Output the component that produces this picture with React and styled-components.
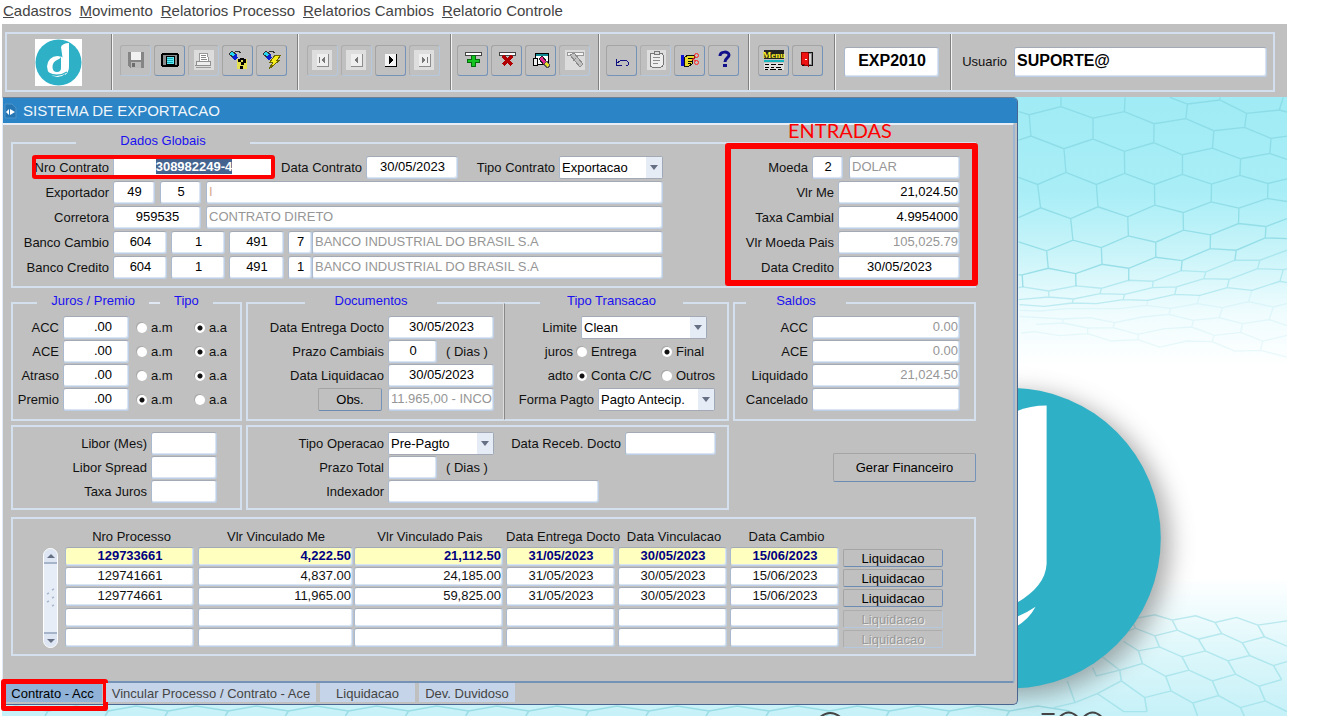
import React, { useEffect, useRef } from 'react'
import styled, { createGlobalStyle } from 'styled-components'

const GlobalStyle = createGlobalStyle`
  * {
    box-sizing: border-box;
  }
  body {
    margin: 0;
    background: #fff;
    color: #111;
    font: 13px/16px "Liberation Sans", Arial, sans-serif;
  }
  input, select, button {
    font: inherit;
    color: inherit;
    margin: 0;
  }
`

const Page = styled.div`
  margin: 0 42px 0 2px;
  min-width: 1240px;
`

const MenuBar = styled.nav`
  display: flex;
  gap: 8px;
  height: 24px;
  padding-left: 1px;
  font-size: 15px;
  line-height: 22px;
`

const MenuLink = styled.a`
  color: #444;
  text-decoration: none;
  white-space: nowrap;
`

/* ---------- toolbar ---------- */

const Toolbar = styled.header`
  background: #c0c0c0;
  padding: 8px 12px 5px 3px;
`

const ToolbarFrame = styled.div`
  display: flex;
  height: 60px;
  border: 2px solid #d3dfee;
`

const Section = styled.div`
  display: flex;
  align-items: center;
  justify-content: center;
  gap: 3px;
  flex: ${(p) => (p.$grow ? '1 1 ' : '0 0 ')}${(p) => p.$width}px;
  padding: ${(p) => (p.$grow ? '0 6px 0 8px' : '0 2px 4px 0')};
  border-right: ${(p) => (p.$grow ? 'none' : '1px solid #808080')};
  box-shadow: ${(p) => (p.$grow ? 'none' : '1px 0 0 #f4f4f4')};
`

const FieldSection = styled(Section)`
  padding-bottom: 0;
`

const ToolButton = styled.button`
  display: flex;
  align-items: center;
  justify-content: center;
  width: 31px;
  height: 31px;
  padding: 0;
  background: #c0c0c0;
  border: 1px solid;
  border-color: ${(p) =>
    p.disabled ? '#adadad #b6c8de #b6c8de #adadad' : '#a4a4a4 #7593b8 #7593b8 #a4a4a4'};
  border-radius: 3px;
`

const Logo = styled.svg`
  width: 47px;
  height: 47px;
`

/* ---------- shared controls ---------- */

const Field = styled.input`
  width: ${(p) => p.$width}px;
  height: ${(p) => p.$height || 23}px;
  flex: none;
  padding: 0 ${(p) => p.$padRight || 1}px 2px 2px;
  text-align: ${(p) => p.$align || 'left'};
  font-weight: ${(p) => (p.$bold ? 700 : 400)};
  font-size: ${(p) => p.$size || 13}px;
  color: ${(p) => p.$color || '#000'};
  background: ${(p) => p.$bg || '#fff'};
  border: 1px solid;
  border-color: #a3a9b5 #bccfe6 #bccfe6 #a9b9cf;
  border-radius: 3px;
  box-shadow: inset -1px -1px 0 #dbe5f1;
  outline: none;

  &::selection {
    background: #44648f;
    color: #fff;
  }
`

const GrowField = styled(Field)`
  flex: 1;
  width: 0;
`

const PushButton = styled.button`
  width: ${(p) => p.$width}px;
  height: ${(p) => p.$height}px;
  padding: 0;
  background: #c0c0c0;
  border: 1px solid;
  border-color: #a4a4a4 #7593b8 #6d8bb0 #a4a4a4;
  border-radius: 2px;
  color: #000;
`

const RowButton = styled(PushButton)`
  display: block;
  margin-top: 2px;
  padding-top: 1px;
  line-height: 15px;

  &:disabled {
    color: #999;
    text-shadow: 1px 1px 0 #ececec;
    border-color: #adadad #b6c8de #b6c8de #adadad;
  }
`

const Drop = styled.span`
  display: inline-grid;
  grid-template-columns: 1fr 16px;
  flex: none;
  width: ${(p) => p.$width}px;
  height: 23px;
  background: #fff;
  border: 1px solid;
  border-color: #a3a9b5 #9fa9b8 #a3a9b5 #a9b9cf;
  border-radius: 2px;

  select {
    grid-area: 1 / 1 / 2 / 3;
    appearance: none;
    padding: 0 0 0 2px;
    border: none;
    background: none;
    outline: none;
    color: #000;
  }
`

const Arrow = styled.span`
  grid-area: 1 / 2;
  display: flex;
  align-items: center;
  justify-content: center;
  background: #e6ecf5;
  pointer-events: none;

  &::after {
    content: "";
    border: 4px solid transparent;
    border-top: 5px solid #667085;
    border-bottom: none;
  }
`

const Label = styled.label`
  flex: none;
  width: ${(p) => p.$width}px;
  padding-right: 4px;
  text-align: right;
  white-space: nowrap;
`

const Unit = styled.span`
  margin-left: 9px;
`

const RadioLabel = styled.label`
  display: flex;
  align-items: center;
  gap: 4px;
  width: ${(p) => p.$width}px;
  white-space: nowrap;
`

const Radio = styled.input`
  appearance: none;
  width: 10px;
  height: 10px;
  border-radius: 50%;
  background: #fff;
  box-shadow: -1px -1px 0 #a9a9a9;

  &:checked {
    background: radial-gradient(circle, #111 0 2px, #fff 3px);
  }
`

/* ---------- window ---------- */

const Desktop = styled.main`
  position: relative;
  padding-bottom: 11px;
  background: linear-gradient(
    #a0ebf5, #a9eef7 95px, #c8f4f9 155px, #effcfe 215px, #fff 270px,
    #fff 480px, #d9f6fa 565px, #c6f1f8
  );
`

const Backdrop = styled.svg`
  position: absolute;
  inset: 0;
  width: 100%;
  height: 100%;
`

const Window = styled.section`
  position: relative;
  width: 79%;
  min-width: 1016px;
  background: #c0c0c0;
  border: 1px solid;
  border-color: #6d7f95 #4a6690 #4a6690 #e2eaf5;
  border-radius: 0 5px 5px 0;
`

const TitleBar = styled.h1`
  display: flex;
  align-items: center;
  gap: 6px;
  height: 25px;
  margin: 0;
  padding-left: 1px;
  background: #2b84c5;
  color: #f0f6fb;
  font-size: 15px;
  font-weight: 400;
  border-radius: 0 4px 0 0;
`

const Body = styled.form`
  display: grid;
  margin-right: 2px;
  padding: 8px 37px 25px 8px;
  border: 2px solid;
  border-color: #e8eef6 #9fb6d2 #7491b6 #c0c0c0;
  border-left: none;
  border-radius: 0 3px 3px 0;
`

const Columns = styled.div`
  display: grid;
  grid-template-columns: 231fr 483fr 243fr;
  gap: 4px;
  margin-top: ${(p) => p.$top}px;
`

const Pair = styled.div`
  display: grid;
  grid-template-columns: 257fr 226fr;
`

const Group = styled.fieldset`
  min-width: 0;
  margin: 0;
  padding: 3px 0 ${(p) => p.$bottom || 8}px;
  border: 2px solid #d5e0ee;
  ${(p) => p.$joined && 'border-right: none;'}
  ${(p) => p.$divided && 'border-left: 2px ridge #dcdcdc;'}
`

const Legend = styled.legend`
  display: flex;
  align-items: center;
  justify-content: center;
  gap: 14px;
  width: ${(p) => p.$width}px;
  height: 20px;
  margin-left: ${(p) => p.$start}px;
  padding: 0;
  background: #c0c0c0;
  color: #1a10f0;

  span {
    padding-bottom: 4px;
  }
`

const LegendRule = styled.i`
  width: 11px;
  height: 2px;
  background: #dfe8f3;
`

const Panel = styled.div`
  padding: 5px 0;
  border: 2px solid #d5e0ee;
`

const Rows = styled.div`
  display: grid;
  row-gap: ${(p) => p.$gap || 1}px;
`

const Row = styled.div`
  display: flex;
  align-items: center;
  gap: ${(p) => p.$gap || 0}px;
  height: 23px;
`

const GrowRow = styled(Row)`
  flex: 1;
`

const RightRow = styled(Row)`
  justify-content: flex-end;
`

const ButtonRow = styled(Row)`
  padding-left: 70px;
  gap: 6px;
`

const Globals = styled.div`
  display: flex;
  justify-content: space-between;
  padding-right: 14px;
`

const Highlighted = styled.div`
  position: relative;
  display: flex;
  align-items: center;
`

/* red annotation frame laid over the fields it surrounds */
const Mark = styled.div`
  position: absolute;
  inset: ${(p) => p.$inset};
  border: ${(p) => p.$thick}px solid #f00;
  border-radius: 3px;
  pointer-events: none;
`

const MarkTitle = styled.span`
  position: absolute;
  bottom: 100%;
  left: 57px;
  margin-bottom: 9px;
  color: #f00;
  font: 400 20px/20px Lato, sans-serif;
`

const ActionCell = styled.div`
  display: flex;
  justify-content: flex-end;
  align-items: center;
`

/* ---------- process table ---------- */

const ListPanel = styled.div`
  display: flex;
  margin-top: 7px;
  padding: 8px 0 6px 30px;
  border: 2px solid #d5e0ee;
`

const Scroller = styled.div`
  display: flex;
  flex-direction: column;
  width: 15px;
  height: 100px;
  margin: 21px 7px 0 0;
  background: #e6edf6;
  border: 1px solid #fff;
  border-radius: 8px;
  overflow: hidden;
`

const ScrollButton = styled.button`
  height: 15px;
  padding: 0;
  border: none;
  background: #dde6f2;
  border-top: ${(p) => (p.$down ? '2px solid #a5b4c8' : 'none')};
  border-bottom: ${(p) => (p.$down ? 'none' : '2px solid #a5b4c8')};
  display: flex;
  justify-content: center;
  align-items: center;
`

const Thumb = styled.div`
  flex: 1;
  display: flex;
  align-items: center;
  justify-content: center;
`

const Table = styled.table`
  table-layout: fixed;
  width: 878px;
  border-collapse: collapse;

  th {
    height: 20px;
    padding: 0;
    font-weight: 400;
    white-space: nowrap;
  }
  td {
    height: 20px;
    padding: 0;
    vertical-align: top;
  }
  td > input {
    display: block;
  }
`

/* ---------- tabs ---------- */

const Tabs = styled.nav`
  display: flex;
  gap: 4px;
  height: 21px;
  padding: 0 0 2px;
`

const Tab = styled.a`
  position: relative;
  width: ${(p) => p.$width}px;
  background: ${(p) => (p.$active ? '#8fb2d6' : '#c5d4e8')};
  color: ${(p) => (p.$active ? '#000' : '#444')};
  line-height: 22px;
  text-align: center;
  text-decoration: none;
  white-space: nowrap;
`

/* ---------- icons ---------- */

function Glyph({ children }) {
  return (
    <svg width="22" height="22" viewBox="0 0 22 22" shapeRendering="crispEdges" aria-hidden="true">
      {children}
    </svg>
  )
}

const NavGlyph = ({ d, off }) => (
  <Glyph>
    {off && <rect x="1" y="1" width="20" height="20" fill="#dedede" />}
    <rect x="6" y="5" width="11" height="12" fill={off ? '#efefef' : '#f4f4f4'} />
    <path d="M6 17.500h11.500v-12.500" fill="none" stroke={off ? '#8c8c8c' : '#000'} />
    <path d={d} fill={off ? '#777' : '#000'} />
  </Glyph>
)

const Torch = () => (
  <>
    <path d="M2 5l3-3 4 3-2 4z" fill="#27d7ef" stroke="#333" />
    <path d="M5 9l4-5 2 5-3 2z" fill="#0a1fd0" />
    <path d="M8 3l3-1 3 2" fill="none" stroke="#333" />
  </>
)

const tools = {
  salvar: (
    <Glyph>
      <path d="M3 3h16v16h-14l-2-2z" fill="#858585" />
      <rect x="6" y="3" width="10" height="8" fill="#f1f1f1" />
      <rect x="6" y="13" width="10" height="6" fill="#b9b9b9" />
      <rect x="7" y="14" width="3" height="4" fill="#6d6d6d" />
    </Glyph>
  ),
  tela: (
    <Glyph>
      <rect x="3" y="5" width="16" height="12" rx="2" fill="#8c8c8c" stroke="#000" strokeWidth="2" />
      <rect x="7" y="7" width="8" height="8" fill="#5fe9f2" stroke="#000" />
      <path d="M8 9.500h6M8 11.500h6M8 13.500h6" stroke="#1aa7b8" />
    </Glyph>
  ),
  imprimir: (
    <Glyph>
      <rect x="1" y="1" width="20" height="20" fill="#dcdcdc" />
      <path d="M6 4h8l2 8h-9z" fill="#fff" stroke="#999" />
      <path d="M8 6.500h5M8 8.500h5M8 10.500h6" stroke="#888" />
      <path d="M4 12h13v4h-14z" fill="#ededed" stroke="#8f8f8f" />
      <path d="M3 18.500h15" stroke="#9a9a9a" />
    </Glyph>
  ),
  consultar: (
    <Glyph>
      <rect x="10" y="10" width="10" height="10" fill="#f4ee22" opacity=".7" />
      <Torch />
      <path d="M11 13v-3h2v-1h4v1h2v4h-2v2h-3v-3h2v-2h-2v2zM13 17h3v3h-3z" fill="#000" />
    </Glyph>
  ),
  executar: (
    <Glyph>
      <Torch />
      <path d="M14 6h6l-4 5h3l-11 9 4-7h-3z" fill="#f7ee1b" stroke="#6c6600" />
    </Glyph>
  ),
  primeiro: <NavGlyph off d="M8 8h1v6h-1zM14 8v6l-4-3z" />,
  anterior: <NavGlyph off d="M13 7v8l-4-4z" />,
  proximo: <NavGlyph d="M10 7v8l4-4z" />,
  ultimo: <NavGlyph off d="M9 8v6l4-3zM14 8h1v6h-1z" />,
  inserir: (
    <Glyph>
      <path d="M3 3.500h16v3h-16z" fill="#fff" stroke="#444" />
      <path d="M9 6h4v4h4v3h-4v4h-4v-4h-4v-3h4z" fill="#14c51f" stroke="#08690e" />
    </Glyph>
  ),
  remover: (
    <Glyph>
      <path d="M3 3.500h16v3h-16z" fill="#fff" stroke="#444" />
      <path d="M7 7l9 9M16 7l-9 9" stroke="#b00000" strokeWidth="3" />
    </Glyph>
  ),
  limparTela: (
    <Glyph>
      <rect x="5" y="4" width="13" height="11" fill="#fff" stroke="#000" />
      <rect x="6" y="5" width="12" height="2" fill="#118a93" />
      <path d="M3 9h4v7h-4z" fill="#eee" stroke="#000" />
      <path d="M9 10l3-3 5 6-3 3z" fill="#e9258a" stroke="#222" />
      <path d="M14 15l3-3 3 5-3 2z" fill="#e8dc2a" stroke="#555" />
    </Glyph>
  ),
  limpar: (
    <Glyph>
      <rect x="1" y="1" width="20" height="20" fill="#dcdcdc" />
      <path d="M3 3.500h16v3h-16z" fill="#f4f4f4" stroke="#999" />
      <path d="M6 6l4-2 9 11-3 3z" fill="#c2c2c2" stroke="#8b8b8b" />
      <path d="M9 12l3-3" stroke="#8b8b8b" />
    </Glyph>
  ),
  desfazer: (
    <Glyph>
      <path d="M5 10v6h6M5 15l5-4h5l2 2v3l-2 1" fill="none" stroke="#10107f" />
    </Glyph>
  ),
  colar: (
    <Glyph>
      <rect x="2" y="1" width="19" height="20" fill="#dedede" />
      <rect x="5" y="4" width="13" height="14" rx="2" fill="#eee" stroke="#777" />
      <path d="M9 2.500h5v3h-5z" fill="#ddd" stroke="#777" />
      <path d="M8 8.500h7M8 11.500h7M8 14.500h5" stroke="#8c8c8c" />
    </Glyph>
  ),
  recortar: (
    <Glyph>
      <rect x="2" y="6" width="3" height="11" fill="#0b11d2" />
      <path d="M5 9l4-3h6v3h-2v6l-3 2h-5z" fill="#e6d92a" stroke="#111" />
      <path d="M9 9.500h4M9 12.500h4M9 14.500h3" stroke="#000" />
      <g fill="none" stroke="#f22" shapeRendering="auto">
        <circle cx="17.500" cy="6.500" r="2" />
        <circle cx="17.500" cy="13.500" r="2" />
        <path d="M17 8l-4 3M17 12l-4-2" />
      </g>
    </Glyph>
  ),
  ajuda: (
    <Glyph>
      <path d="M7 7c0-5 9-5 9-1 0 3-4 3-4 7" fill="none" stroke="#10108a" strokeWidth="3" shapeRendering="auto" />
      <rect x="10" y="15" width="4" height="3" fill="#10108a" />
    </Glyph>
  ),
  menu: (
    <svg width="22" height="24" viewBox="0 0 22 24" aria-hidden="true">
      <rect x="1" y="2" width="20" height="9" fill="#222" />
      <text x="11" y="10" textAnchor="middle" fontSize="9" fontWeight="700" fontFamily="Liberation Serif, serif" fill="#ffef22">Menu</text>
      <g shapeRendering="crispEdges">
        <rect x="1" y="12" width="20" height="2" fill="#16b5bd" />
        <rect x="1" y="15" width="20" height="7" fill="#e2e2e2" />
        <path d="M2 16.500h4m2 0h5m2 0h5M2 19.500h4m2 0h3m2 0h5M2 21.500h3m2 0h6m2 0h4" stroke="#000" />
      </g>
    </svg>
  ),
  sair: (
    <Glyph>
      <path d="M5 3h10v13h-10z" fill="#8a8a8a" stroke="#111" />
      <path d="M11 5h3v10h-3z" fill="#d5d5d5" />
      <path d="M4 3l7 1v13l-7-2z" fill="#ee1212" stroke="#900" />
      <path d="M8 10h2v1h-2z" fill="#fff" />
    </Glyph>
  ),
}

const toolGroups = [
  { width: 186, items: [['salvar', true], ['tela'], ['imprimir', true], ['consultar'], ['executar']] },
  { width: 153, items: [['primeiro', true], ['anterior', true], ['proximo'], ['ultimo', true]] },
  { width: 148, items: [['inserir'], ['remover'], ['limparTela'], ['limpar', true]] },
  { width: 150, items: [['desfazer'], ['colar', true], ['recortar'], ['ajuda']] },
  { width: 86, items: [['menu'], ['sair']] },
]

/* ---------- backdrop drawing ---------- */

const topMesh = `
M177 65L209 74 304 50 400 84 494 65 583 101 678 86 762 122 854 112 933 145 981 138
M304 50V22M494 65L496 22M678 86L683 42M854 112L860 70M630 22L683 42 780 30 860 70 958 60 981 66M780 30V22M958 60L970 22
M209 74L214 138M400 84V147M583 101L582 158M762 122L758 174M933 145L930 190
M177 150L214 138 313 176 400 147 494 184 582 158 668 194 758 174 842 206 930 190 981 208
M313 176L319 247M494 184L495 250M668 194V253M842 206L840 256
M177 262L234 283 319 247 410 283 495 250 584 283 668 253 755 282 840 256 924 280 981 266
M234 283L243 353M410 283L415 350M584 283L585 345M755 282L754 335M924 280L923 325
M177 382L243 353 333 385 415 350 504 380 585 345 670 367 754 335 837 354 923 325 981 334
M333 385L340 450M504 380L506 437M670 367L671 420M837 354L836 400
M177 455L261 482 340 450 425 472 506 437 588 456 671 420 752 434 836 400 918 409 981 385
M261 482L266 534M425 472L427 522M588 456V501M752 434L751 475M918 409L916 443 981 445
M177 554L188 554 266 534 348 550 427 522 507 534 588 501 667 511 751 475 829 480 916 443
M188 554L190 590M348 550L349 587M507 534V570M667 511L664 541M829 480L825 510`

const middleMesh = `
M177 592L190 590 267 602 349 587 425 594 507 570 580 573 664 541 738 545 825 510 900 510 981 480
M267 602L268 620M425 594L421 610M580 573L578 592M738 545L732 565M900 510L893 535
M177 628L268 620 341 626 421 610 495 612 578 592 650 590 732 565 808 567 893 535 970 538 981 536
M341 626L338 638M495 612L490 628M650 590L645 612M808 567L802 592M970 538L960 573
M180 643L254 648 338 638 410 640 490 628 564 630 645 612 720 615 802 592 876 600 960 573 981 577`

const fadedMesh = `
M564 630L560 645M720 615L712 640M876 600L866 634
M180 660L240 662 322 655 400 655 480 655 560 645 632 654 712 640 788 652 866 634 940 650 981 640
M632 654L628 672M788 652L778 682M940 650L928 688
M180 678L310 686 390 682 465 697 548 680 628 672 700 690 778 682 848 700 928 688 981 706
M700 690L696 710M848 700L842 726M310 686V698M465 697L460 712
M230 702L310 698 384 713 460 712 535 732 615 715 696 710 763 735 842 726 908 752 981 735
M384 713V730M535 732V748M763 735L757 754M908 752L902 780
M185 728L225 724 300 736 384 730 455 752 535 748 600 770 680 752 757 754 825 782 902 780 981 800`

const lowerMesh = `
M1060 985L1120 972 1165 988 1225 975 1275 995 1330 980 1385 1003 1460 990
M1165 988L1178 1018M1275 995L1292 1028M1385 1003L1402 1038M1060 985L1070 1012
M1030 1030L1070 1012 1120 1035 1178 1018 1232 1045 1292 1028 1345 1056 1402 1038 1460 1066
M1120 1035L1132 1068M1232 1045L1250 1080M1345 1056L1364 1094
M1040 1052L1078 1080 1132 1068 1190 1098 1250 1080 1308 1110 1364 1094 1425 1124 1460 1112
M1078 1080L1088 1118M1190 1098L1208 1138M1308 1110L1328 1150M1425 1124L1446 1166
M985 1098L1030 1138 1088 1118 1148 1156 1208 1138 1268 1170 1328 1150 1388 1186 1446 1166
M960 1130L970 1155 1030 1138M1030 1138L1034 1170M1148 1156L1162 1200M1268 1170L1284 1214M1388 1186L1404 1230
M895 1170L915 1235 972 1208 1034 1170 1094 1220 1162 1200 1218 1236 1284 1214 1340 1250 1404 1230 1460 1262
M1094 1220L1100 1262M1218 1236L1230 1275M1340 1250L1350 1275M915 1235L860 1250M972 1208L1040 1262 1100 1262`

const stripMesh = Array.from({ length: 18 }, (_, i) => {
  const x = i * 60 - 12
  return `M${x} 613L${x + 28} 608 ${x + 60} 613M${x} 613L${x - 3} 618`
}).join('')

function Scenery() {
  return (
    <Backdrop viewBox="0 0 1285 618" preserveAspectRatio="xMaxYMin slice" aria-hidden="true">
      <defs>
        <filter id="soft" x="-20%" y="-20%" width="140%" height="140%">
          <feGaussianBlur stdDeviation="12" />
        </filter>
      </defs>
      <g fill="none" stroke="#86d7e2" strokeWidth="4">
        <path d={topMesh} transform="translate(958 -7) scale(.3333)" opacity=".75" />
        <path d={middleMesh} transform="translate(958 -7) scale(.3333)" opacity=".45" />
        <path d={fadedMesh} transform="translate(958 -7) scale(.3333)" opacity=".15" />
        <path d={lowerMesh} transform="translate(718 193) scale(.3884 .3333)" opacity=".5" />
      </g>
      <path d={stripMesh} fill="none" stroke="#9bdde6" strokeWidth="1.500" />
      <circle cx="1017" cy="447" r="151" fill="#555" opacity=".5" filter="url(#soft)" />
      <circle cx="1009" cy="440.500" r="150" fill="#2eb0c6" />
      <path d="M1010 316Q1026 308 1045 308V466Q1044 490 1010 508Z" fill="#fff" />
      <path d="M1010 521Q1024 516 1034 509Q1026 524 1010 531Z" fill="#fff" />
      <g fill="none" stroke="#444" strokeWidth="2">
        <path d="M819 619q10-8 20 0M1040 616h13M1058 619q9-9 18 0M1082 619q9-9 18 0" />
      </g>
    </Backdrop>
  )
}

/* ---------- pieces ---------- */

function Select({ id, width, value }) {
  return (
    <Drop $width={width}>
      <select id={id} defaultValue={value}>
        <option>{value}</option>
      </select>
      <Arrow />
    </Drop>
  )
}

function Choice({ name, text, width, checked }) {
  return (
    <RadioLabel $width={width}>
      <Radio type="radio" name={name} defaultChecked={checked} />
      {text}
    </RadioLabel>
  )
}

function Entry({ id, label, labelWidth, ...rest }) {
  return (
    <Row>
      <Label htmlFor={id} $width={labelWidth}>{label}</Label>
      <Field id={id} {...rest} />
    </Row>
  )
}

const rates = [
  ['ACC', 'aa'],
  ['ACE', 'aa'],
  ['Atraso', 'aa'],
  ['Premio', 'am'],
]

const banks = [
  ['Banco Cambio', '7'],
  ['Banco Credito', '1'],
]

const balances = [
  ['ACC', '0.00'],
  ['ACE', '0.00'],
  ['Liquidado', '21,024.50'],
  ['Cancelado', ''],
]

const columns = [
  { title: 'Nro Processo', col: 133, field: 129, align: 'center' },
  { title: 'Vlr Vinculado Me', col: 156, field: 155, align: 'right' },
  { title: 'Vlr Vinculado Pais', col: 152, field: 149, align: 'right' },
  { title: 'Data Entrega Docto', col: 112, field: 109, align: 'center' },
  { title: 'Data Vinculacao', col: 112, field: 109, align: 'center' },
  { title: 'Data Cambio', col: 113, field: 109, align: 'center' },
]

const processes = [
  ['129733661', '4,222.50', '21,112.50', '31/05/2023', '30/05/2023', '15/06/2023'],
  ['129741661', '4,837.00', '24,185.00', '31/05/2023', '30/05/2023', '15/06/2023'],
  ['129774661', '11,965.00', '59,825.00', '31/05/2023', '30/05/2023', '15/06/2023'],
  ['', '', '', '', '', ''],
  ['', '', '', '', '', ''],
]

const GREY = '#969696'

function GlobalData() {
  const contract = useRef(null)

  useEffect(() => {
    contract.current.focus()
    contract.current.select()
  }, [])

  return (
    <Group $bottom={7}>
      <Legend $start={63} $width={174}><span>Dados Globais</span></Legend>
      <Globals>
        <Rows $gap={2}>
          <Row>
            <Highlighted>
              <Label htmlFor="contrato" $width={100}>Nro Contrato</Label>
              <Field id="contrato" ref={contract} $width={161} $align="center" $bold defaultValue="308982249-4" />
              <Mark $inset="-1px -1px 0 19px" $thick={4} />
            </Highlighted>
            <Label htmlFor="dataContrato" $width={92}>Data Contrato</Label>
            <Field id="dataContrato" $width={92} $align="center" defaultValue="30/05/2023" />
            <Label htmlFor="tipoContrato" $width={101}>Tipo Contrato</Label>
            <Select id="tipoContrato" width={104} value="Exportacao" />
          </Row>
          <Row>
            <Label htmlFor="exportador" $width={100}>Exportador</Label>
            <GrowRow $gap={5}>
              <Field id="exportador" $width={42} $align="center" defaultValue="49" />
              <Field aria-label="Filial" $width={41} $align="center" defaultValue="5" />
              <GrowField aria-label="Nome do exportador" $color="#d9a98a" defaultValue="I" />
            </GrowRow>
          </Row>
          <Row>
            <Label htmlFor="corretora" $width={100}>Corretora</Label>
            <GrowRow $gap={5}>
              <Field id="corretora" $width={88} $align="center" defaultValue="959535" />
              <GrowField aria-label="Nome da corretora" $color={GREY} defaultValue="CONTRATO DIRETO" />
            </GrowRow>
          </Row>
          {banks.map(([name, digit]) => (
            <Row key={name}>
              <Label htmlFor={name} $width={100}>{name}</Label>
              <Row $gap={4}>
                <Field id={name} $width={54} $align="center" defaultValue="604" />
                <Field aria-label="Praca" $width={54} $align="center" defaultValue="1" />
                <Field aria-label="Agencia" $width={55} $align="center" defaultValue="491" />
                <Field aria-label="Digito" $width={24} $align="center" defaultValue={digit} />
              </Row>
              <GrowField aria-label={`Nome ${name}`} $color={GREY} defaultValue="BANCO INDUSTRIAL DO BRASIL S.A" />
            </Row>
          ))}
        </Rows>

        <Highlighted>
          <Rows $gap={2}>
            <RightRow>
              <Label htmlFor="moeda" $width={82}>Moeda</Label>
              <Row $gap={6}>
                <Field id="moeda" $width={31} $align="center" defaultValue="2" />
                <Field aria-label="Nome da moeda" $width={111} $color={GREY} defaultValue="DOLAR" />
              </Row>
            </RightRow>
            <Entry id="vlrMe" label="Vlr Me" labelWidth={108} $width={122} $align="right" defaultValue="21,024.50" />
            <Entry id="taxaCambial" label="Taxa Cambial" labelWidth={108} $width={122} $align="right" defaultValue="4.9954000" />
            <Entry id="vlrPais" label="Vlr Moeda Pais" labelWidth={108} $width={122} $align="right" $color={GREY} defaultValue="105,025.79" />
            <Entry id="dataCredito" label="Data Credito" labelWidth={108} $width={122} $align="center" defaultValue="30/05/2023" />
          </Rows>
          <Mark $inset="-13px -18px -7px -5px" $thick={6}>
            <MarkTitle>ENTRADAS</MarkTitle>
          </Mark>
        </Highlighted>
      </Globals>
    </Group>
  )
}

function Details() {
  return (
    <Columns $top={5}>
      <Group>
        <Legend $start={24} $width={176}>
          <span>Juros / Premio</span>
          <LegendRule />
          <span>Tipo</span>
        </Legend>
        <Rows>
          {rates.map(([name, kind]) => (
            <Row key={name}>
              <Label htmlFor={`juros${name}`} $width={50}>{name}</Label>
              <Row $gap={8}>
                <Field id={`juros${name}`} $width={66} $align="right" $padRight={16} defaultValue=".00" />
                <Row>
                  <Choice name={`tipo${name}`} text="a.m" width={58} checked={kind === 'am'} />
                  <Choice name={`tipo${name}`} text="a.a" width={40} checked={kind === 'aa'} />
                </Row>
              </Row>
            </Row>
          ))}
        </Rows>
      </Group>

      <Pair>
        <Group $joined>
          <Legend $start={57} $width={132}><span>Documentos</span></Legend>
          <Rows>
            <Entry id="entregaDocto" label="Data Entrega Docto" labelWidth={140} $width={106} $align="center" defaultValue="30/05/2023" />
            <Row>
              <Label htmlFor="prazoCambiais" $width={140}>Prazo Cambiais</Label>
              <Field id="prazoCambiais" $width={49} $align="center" defaultValue="0" />
              <Unit>( Dias )</Unit>
            </Row>
            <Entry id="dataLiquidacao" label="Data Liquidacao" labelWidth={140} $width={106} $align="center" defaultValue="30/05/2023" />
            <ButtonRow>
              <PushButton type="button" $width={64} $height={23}>Obs.</PushButton>
              <Field aria-label="Observacao" $width={106} $color={GREY} defaultValue="11.965,00 - INCO" />
            </ButtonRow>
          </Rows>
        </Group>
        <Group $divided>
          <Legend $start={35} $width={143}><span>Tipo Transacao</span></Legend>
          <Rows>
            <Row>
              <Label htmlFor="limite" $width={76}>Limite</Label>
              <Select id="limite" width={126} value="Clean" />
            </Row>
            <Row role="radiogroup" aria-label="juros">
              <Label as="span" $width={72}>juros</Label>
              <Choice name="juros" text="Entrega" width={85} />
              <Choice name="juros" text="Final" width={56} checked />
            </Row>
            <Row role="radiogroup" aria-label="adto">
              <Label as="span" $width={72}>adto</Label>
              <Choice name="adto" text="Conta C/C" width={85} checked />
              <Choice name="adto" text="Outros" width={56} />
            </Row>
            <Row>
              <Label htmlFor="formaPagto" $width={93}>Forma Pagto</Label>
              <Select id="formaPagto" width={117} value="Pagto Antecip." />
            </Row>
          </Rows>
        </Group>
      </Pair>

      <Group>
        <Legend $start={11} $width={100}><span>Saldos</span></Legend>
        <Rows>
          {balances.map(([name, value]) => (
            <Entry key={name} id={`saldo${name}`} label={name} labelWidth={77} $width={148} $align="right" $color={GREY} defaultValue={value} />
          ))}
        </Rows>
      </Group>
    </Columns>
  )
}

function Operation() {
  return (
    <Columns $top={4}>
      <Panel>
        <Rows>
          <Entry id="libor" label="Libor (Mes)" labelWidth={138} $width={66} />
          <Entry id="spread" label="Libor Spread" labelWidth={138} $width={66} />
          <Entry id="taxaJuros" label="Taxa Juros" labelWidth={138} $width={66} />
        </Rows>
      </Panel>
      <Panel>
        <Rows>
          <Row>
            <Label htmlFor="tipoOperacao" $width={140}>Tipo Operacao</Label>
            <Select id="tipoOperacao" width={106} value="Pre-Pagto" />
            <Label htmlFor="dataReceb" $width={131}>Data Receb. Docto</Label>
            <Field id="dataReceb" $width={91} />
          </Row>
          <Row>
            <Label htmlFor="prazoTotal" $width={140}>Prazo Total</Label>
            <Field id="prazoTotal" $width={49} />
            <Unit>( Dias )</Unit>
          </Row>
          <Entry id="indexador" label="Indexador" labelWidth={140} $width={211} />
        </Rows>
      </Panel>
      <ActionCell>
        <PushButton type="button" $width={143} $height={29}>Gerar Financeiro</PushButton>
      </ActionCell>
    </Columns>
  )
}

function ProcessList() {
  return (
    <ListPanel>
      <Scroller>
        <ScrollButton type="button" aria-label="Subir">
          <svg width="8" height="4"><path d="M0 4l4-4 4 4z" fill="#667085" /></svg>
        </ScrollButton>
        <Thumb>
          <svg width="9" height="20" viewBox="0 0 9 20" fill="none" stroke="#a9b8cc">
            <path d="M6 2l2-1M1 6l2-1M6 10l2-1M1 14l2-1M6 18l2-1" strokeWidth="1.500" />
          </svg>
        </Thumb>
        <ScrollButton type="button" aria-label="Descer" $down>
          <svg width="8" height="4"><path d="M0 0h8l-4 4z" fill="#667085" /></svg>
        </ScrollButton>
      </Scroller>
      <Table>
        <colgroup>
          {columns.map((c) => <col key={c.title} width={c.col} />)}
          <col width="100" />
        </colgroup>
        <thead>
          <tr>
            {columns.map((c) => <th key={c.title} scope="col">{c.title}</th>)}
            <td />
          </tr>
        </thead>
        <tbody>
          {processes.map((row, r) => (
            <tr key={r}>
              {columns.map((c, i) => (
                <td key={c.title}>
                  <Field
                    aria-label={`${c.title} ${r + 1}`}
                    $width={c.field}
                    $height={19}
                    $align={c.align}
                    $bold={r === 0}
                    $bg={r === 0 ? '#ffffc0' : '#fff'}
                    $color={r === 0 ? '#000080' : '#111'}
                    defaultValue={row[i]}
                  />
                </td>
              ))}
              <td>
                <RowButton type="button" $width={100} $height={18} disabled={r > 2}>Liquidacao</RowButton>
              </td>
            </tr>
          ))}
        </tbody>
      </Table>
    </ListPanel>
  )
}

function App() {
  return (
    <>
      <GlobalStyle />
      <Page>
        <MenuBar>
          {['Cadastros', 'Movimento', 'Relatorios Processo', 'Relatorios Cambios', 'Relatorio Controle'].map((m) => (
            <MenuLink key={m} href="#">
              <u>{m[0]}</u>{m.slice(1)}
            </MenuLink>
          ))}
        </MenuBar>

        <Toolbar>
          <ToolbarFrame>
            <FieldSection $width={105}>
              <Logo viewBox="0 0 47 47" aria-label="Logo">
                <rect width="47" height="47" fill="#fff" />
                <circle cx="23.500" cy="23.500" r="23" fill="#2eb0c6" />
                <circle cx="22.500" cy="27.500" r="10.500" fill="#fff" />
                <path d="M26 8q2-4 8-4v24q0 5-4 8z" fill="#fff" />
                <path d="M26 20v9q0 4-4 4-4.500 0-4.500-5 0-5 4.500-7 3-1 4-3z" fill="#2eb0c6" />
                <path d="M13 34q10 5 19-1" fill="none" stroke="#2eb0c6" strokeWidth="1.500" />
              </Logo>
            </FieldSection>
            {toolGroups.map((g) => (
              <Section key={g.width} $width={g.width}>
                {g.items.map(([name, off]) => (
                  <ToolButton key={name} type="button" aria-label={name} disabled={off}>
                    {tools[name]}
                  </ToolButton>
                ))}
              </Section>
            ))}
            <FieldSection $width={116}>
              <Field aria-label="Programa" $width={95} $height={30} $size={16} $align="center" $bold defaultValue="EXP2010" />
            </FieldSection>
            <Section $width={320} $grow>
              <Label htmlFor="usuario" $width={52}>Usuario</Label>
              <GrowField id="usuario" $height={30} $size={16} $bold defaultValue="SUPORTE@" />
            </Section>
          </ToolbarFrame>
        </Toolbar>

        <Desktop>
          <Scenery />
          <Window>
            <TitleBar>
              <svg width="13" height="16" viewBox="0 0 13 16" aria-hidden="true">
                <path d="M1 1h7l4 4v10h-11z" fill="#2676b4" stroke="#4a93cb" />
                <path d="M2 9l3-3v6z" fill="#fff" />
                <path d="M6 6l5 3-5 3z" fill="#fff" />
              </svg>
              SISTEMA DE EXPORTACAO
            </TitleBar>
            <Body>
              <GlobalData />
              <Details />
              <Operation />
              <ProcessList />
            </Body>
            <Tabs>
              <Tab href="#" $width={99} $active>
                Contrato - Acc
                <Mark $inset="-4px -6px -9px -2px" $thick={5} />
              </Tab>
              <Tab href="#" $width={210}>Vincular Processo / Contrato - Ace</Tab>
              <Tab href="#" $width={95}>Liquidacao</Tab>
              <Tab href="#" $width={96}>Dev. Duvidoso</Tab>
            </Tabs>
          </Window>
        </Desktop>
      </Page>
    </>
  )
}

export default App
